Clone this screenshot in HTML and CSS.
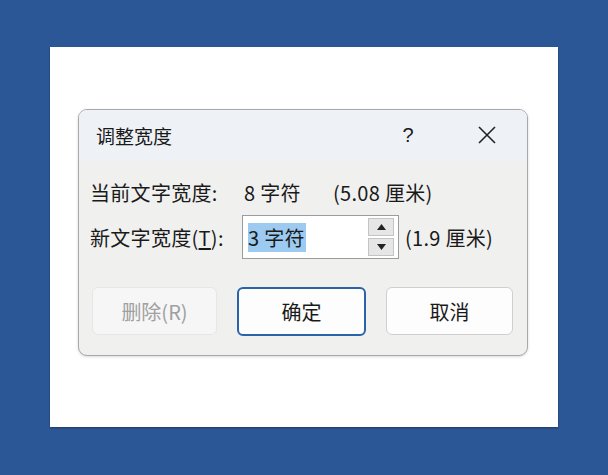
FILE: index.html
```html
<!DOCTYPE html>
<html lang="zh">
<head>
<meta charset="utf-8">
<link rel="stylesheet" href="styles.css">
</head>
<body>
<div class="panel">
  <div class="dialog">
    <div class="titlebar">
      <span class="title">调整宽度</span>
      <span class="help">?</span>
      <span class="close">
        <svg width="18" height="18" viewBox="0 0 18 18"><path d="M1 1L17 17M17 1L1 17" stroke="#222" stroke-width="1.6" fill="none"/></svg>
      </span>
    </div>
    <div class="content">
      <div class="row row1">
        <span class="label">当前文字宽度:</span>
        <span class="val">8 字符</span>
        <span class="cm">(5.08 厘米)</span>
      </div>
      <div class="row row2">
        <span class="label">新文字宽度(<u>T</u>):</span>
        <div class="textbox">
          <span class="sel">3 字符</span>
          <div class="spin">
            <span class="sbtn"><svg width="9" height="6" viewBox="0 0 9 6"><path d="M4.5 0L9 6H0Z" fill="#222"/></svg></span>
            <span class="sbtn"><svg width="9" height="6" viewBox="0 0 9 6"><path d="M0 0H9L4.5 6Z" fill="#222"/></svg></span>
          </div>
        </div>
        <span class="cm2">(1.9 厘米)</span>
      </div>
      <div class="buttons">
        <div class="btn disabled">删除(R)</div>
        <div class="btn primary">确定</div>
        <div class="btn cancel">取消</div>
      </div>
    </div>
  </div>
</div>
</body>
</html>
```
FILE: styles.css
```css
html, body { margin: 0; padding: 0; }
body {
  background: #2c5797;
  width: 608px;
  height: 475px;
  padding: 47px 0 0 50px;
  box-sizing: border-box;
  font-family: "Noto Sans CJK SC", "Noto Sans", sans-serif;
  color: #1a1a1a;
}
.panel {
  width: 508px;
  height: 380px;
  background: #ffffff;
  box-sizing: border-box;
  padding: 62px 0 0 28px;
  box-shadow: 0 1px 2px rgba(0,0,0,0.35);
}
.dialog {
  width: 450px;
  height: 247px;
  box-sizing: border-box;
  border: 1px solid #a8a8a8;
  border-radius: 9px;
  background: #f0f0ef;
  overflow: hidden;
  display: flex;
  flex-direction: column;
  box-shadow: 0 1px 3px rgba(0,0,0,0.15);
}
.titlebar {
  height: 51px;
  flex: none;
  background: #eef2f7;
  display: flex;
  align-items: center;
  padding-left: 17px;
  padding-bottom: 1px;
  box-sizing: border-box;
  font-size: 19px;
}
.title { flex: 1; }
.help {
  width: 20px;
  text-align: center;
  font-family: "Liberation Sans", sans-serif;
  font-size: 20px;
  margin-right: 60px;
}
.close {
  display: flex;
  margin-right: 31px;
}
.content {
  padding: 18px 0 0 11px;
  font-size: 20px;
  letter-spacing: 0.3px;
}
.row {
  display: flex;
  align-items: center;
}
.label {
  width: 152px;
  flex: none;
  white-space: nowrap;
}
.label u { text-decoration: underline; text-underline-offset: 2px; }
.row1 { height: 26px; }
.val { width: 89px; padding-left: 2px; }
.row2 { margin-top: 10px; }
.textbox {
  width: 157px;
  height: 44px;
  box-sizing: border-box;
  border: 1px solid #9c9c9c;
  background: #fff;
  display: flex;
  align-items: center;
  padding: 0 4px 0 5px;
}
.sel {
  background: #9ccaf0;
  line-height: 29px;
  padding-right: 1px;
  white-space: nowrap;
}
.spin {
  margin-left: auto;
  display: flex;
  flex-direction: column;
  gap: 2px;
}
.sbtn {
  width: 26px;
  height: 18px;
  box-sizing: border-box;
  background: #e6e6e6;
  border: 1px solid #c4c4c4;
  display: flex;
  align-items: center;
  justify-content: center;
}
.cm2 { margin-left: 6px; }
.buttons {
  display: flex;
  gap: 20px;
  margin-top: 28px;
  padding-left: 2px;
  letter-spacing: 0;
}
.btn {
  height: 48px;
  box-sizing: border-box;
  border-radius: 6px;
  display: flex;
  align-items: center;
  justify-content: center;
}
.disabled {
  width: 125px;
  background: #f6f6f6;
  border: 1px solid #e6e6e6;
  color: #a0a0a0;
}
.primary {
  width: 129px;
  background: #fdfdfd;
  border: 2px solid #2a63a8;
  height: 49px;
}
.cancel {
  width: 127px;
  background: #fdfdfd;
  border: 1px solid #cfcfcf;
}
```
